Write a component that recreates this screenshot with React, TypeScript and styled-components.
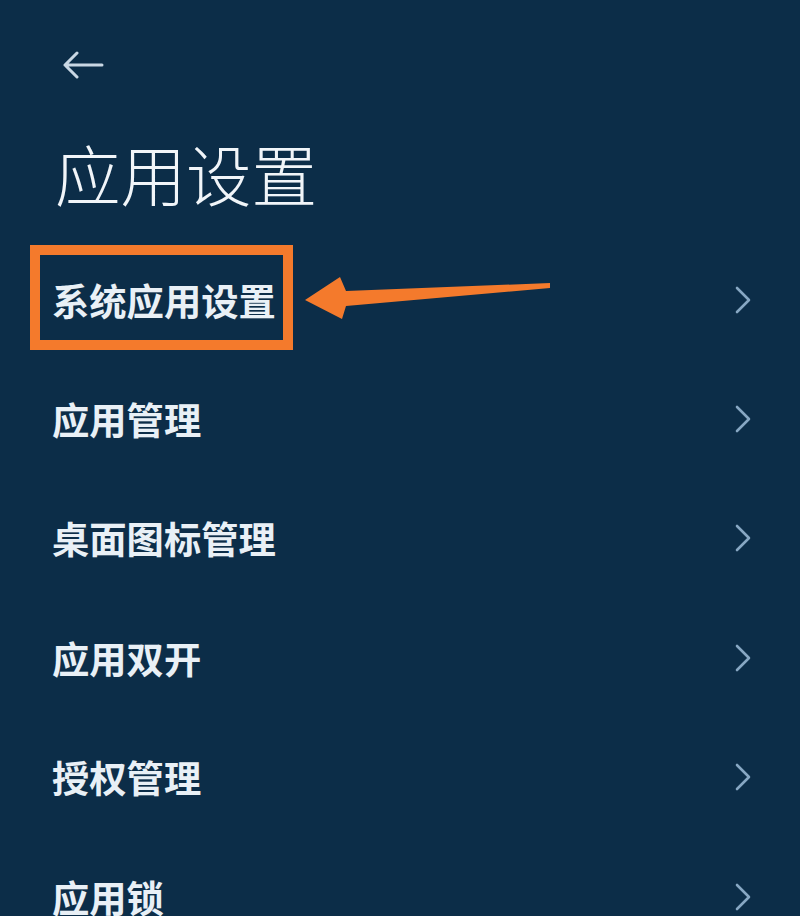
import React from 'react';
import styled, { createGlobalStyle } from 'styled-components';

const GlobalStyle = createGlobalStyle`
  html, body {
    margin: 0;
    padding: 0;
    background: #0c2d48;
  }
  body {
    font-family: "Noto Sans CJK SC", "Noto Sans", sans-serif;
  }
`;

const Page = styled.div`
  width: 800px;
  height: 916px;
  overflow: hidden;
  background: #0c2d48;
  color: #e9f0f6;
`;

const Header = styled.header`
  padding: 50px 0 0 62px;
  height: 30px;
  display: flex;
  align-items: center;
`;

const BackButton = styled.button`
  border: 0;
  background: none;
  padding: 0;
  display: flex;
  color: #c9d7e4;
`;

const Title = styled.h1`
  margin: 0;
  padding: 60px 0 0 55px;
  font-size: 65.5px;
  line-height: 65px;
  font-weight: 300;
  letter-spacing: 0;
  color: #f1f5f9;
`;

const List = styled.ul`
  list-style: none;
  margin: 0;
  padding: 0;
  padding-top: 35px;
`;

const Row = styled.li`
  position: relative;
  height: 119.4px;
  display: flex;
  align-items: center;
  justify-content: space-between;
  padding: 0 48px 0 52px;
`;

const Label = styled.span`
  font-size: 37.3px;
  line-height: 44px;
  font-weight: 700;
  color: #e9f0f6;
`;

const Chevron = styled.svg`
  width: 18px;
  height: 28px;
  color: #87a7c3;
  flex: none;
`;

const Highlight = styled.div`
  position: absolute;
  left: 30px;
  top: 5px;
  width: 263px;
  height: 105px;
  box-sizing: border-box;
  border: 10px solid #f47a2c;
  pointer-events: none;
`;

const Pointer = styled.svg`
  position: absolute;
  left: 0;
  top: 0;
  width: 800px;
  height: 120px;
  pointer-events: none;
`;

const items = ['系统应用设置', '应用管理', '桌面图标管理', '应用双开', '授权管理', '应用锁'];

const App: React.FC = () => {
  return (
    <Page>
      <GlobalStyle />
      <Header>
        <BackButton aria-label="返回">
          <svg width="42" height="28" viewBox="0 0 42 28" fill="none">
            <path
              d="M40 14H3M15 2L3 14l12 12"
              stroke="currentColor"
              strokeWidth="3"
              strokeLinecap="round"
              strokeLinejoin="round"
            />
          </svg>
        </BackButton>
      </Header>
      <Title>应用设置</Title>
      <List>
        {items.map((item, i) => (
          <Row key={item}>
            <Label>{item}</Label>
            <Chevron viewBox="0 0 18 28" fill="none">
              <path
                d="M3 2l12 12L3 26"
                stroke="currentColor"
                strokeWidth="2.6"
                strokeLinecap="round"
                strokeLinejoin="round"
              />
            </Chevron>
            {i === 0 && (
              <>
                <Highlight />
                <Pointer viewBox="0 240 800 120">
                  <polygon
                    points="305,300 340,277 346,291 550,283 550,288 346,306 342,319"
                    fill="#f47a2c"
                  />
                </Pointer>
              </>
            )}
          </Row>
        ))}
      </List>
    </Page>
  );
};

export default App;
